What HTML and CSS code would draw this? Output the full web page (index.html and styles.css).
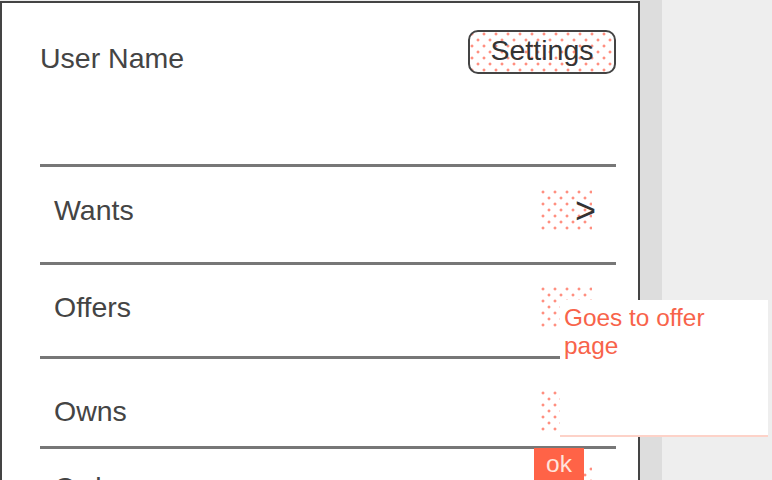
FILE: index.html
```html
<!DOCTYPE html>
<html>
<head>
<meta charset="utf-8">
<link rel="stylesheet" href="styles.css">
</head>
<body>
<div class="screen">
  <div class="phone">
    <div class="header">
      <div class="user-name">User Name</div>
      <div class="settings">Settings</div>
    </div>
    <div class="row row-wants">
      <span class="label">Wants</span>
      <span class="patch"><span class="chevron">&gt;</span></span>
    </div>
    <div class="row row-offers">
      <span class="label">Offers</span>
      <span class="patch"></span>
    </div>
    <div class="row row-owns">
      <span class="label">Owns</span>
      <span class="patch"></span>
    </div>
    <div class="row row-orders">
      <span class="label">Orders</span>
      <span class="patch"></span>
    </div>
  </div>
  <div class="scroll-strip"></div>
  <div class="canvas-rest"></div>
</div>
<div class="note">Goes to offer page</div>
<div class="ok-btn">ok</div>
</body>
</html>
```
FILE: styles.css
```css
html, body {
  margin: 0;
  padding: 0;
}
body {
  background: #eeeeee;
  width: 772px;
  height: 480px;
  overflow: hidden;
  position: relative;
  font-family: "Liberation Sans", Arial, sans-serif;
  color: #444444;
}
.screen {
  display: flex;
  height: 480px;
}
.phone {
  box-sizing: border-box;
  width: 640px;
  height: 560px;
  margin-top: 1px;
  border: 2px solid #444444;
  background: #ffffff;
  flex: none;
}
.scroll-strip {
  width: 22px;
  background: #dddddd;
  flex: none;
}
.canvas-rest {
  flex: 1;
  background: #eeeeee;
}
.header {
  height: 161px;
  box-sizing: border-box;
  padding: 27px 22px 0 38px;
  display: flex;
  justify-content: space-between;
  align-items: flex-start;
}
.user-name {
  font-size: 28.5px;
  line-height: 32px;
  margin-top: 12px;
  color: #444444;
}
.settings,
.patch {
  background-color: #ffffff;
  background-image:
    radial-gradient(circle at 2px 2px, #ff8f80 0, #ff8f80 1.1px, rgba(255,143,128,0) 1.8px),
    radial-gradient(circle at 8px 8px, #ff8f80 0, #ff8f80 1.1px, rgba(255,143,128,0) 1.8px);
  background-size: 12px 12px, 12px 12px;
}
.settings {
  box-sizing: border-box;
  width: 148px;
  height: 44px;
  border: 2px solid #444444;
  border-radius: 10px;
  font-size: 28.5px;
  line-height: 37px;
  text-align: center;
  color: #333333;
}
.row {
  box-sizing: border-box;
  margin: 0 22px 0 38px;
  border-top: 3px solid #777777;
  display: flex;
  align-items: center;
  justify-content: space-between;
  padding-left: 14px;
  padding-right: 24px;
}
.row-wants {
  height: 98px;
  padding-bottom: 9px;
}
.row-offers {
  height: 94px;
  padding-bottom: 7px;
}
.row-owns {
  height: 90px;
  padding-top: 17px;
}
.row-orders {
  height: 79px;
}
.label {
  font-size: 28.5px;
  line-height: 32px;
  color: #444444;
}
.patch {
  width: 51px;
  height: 40px;
  display: flex;
  align-items: center;
  justify-content: flex-end;
}
.chevron {
  font-size: 36px;
  line-height: 36px;
  color: #333333;
  margin-right: -4px;
  margin-top: 2px;
}
.note {
  position: absolute;
  left: 560px;
  top: 300px;
  width: 208px;
  height: 137px;
  box-sizing: border-box;
  background: #ffffff;
  border-bottom: 2px solid #fdd2c8;
  padding: 4px 40px 0 4px;
  font-size: 24.4px;
  line-height: 28px;
  color: #f8634a;
}
.ok-btn {
  position: absolute;
  left: 534px;
  top: 448px;
  width: 50px;
  height: 36px;
  background: #ff6347;
  color: #ffe4dc;
  font-size: 24.5px;
  line-height: 32px;
  text-align: center;
}
```
